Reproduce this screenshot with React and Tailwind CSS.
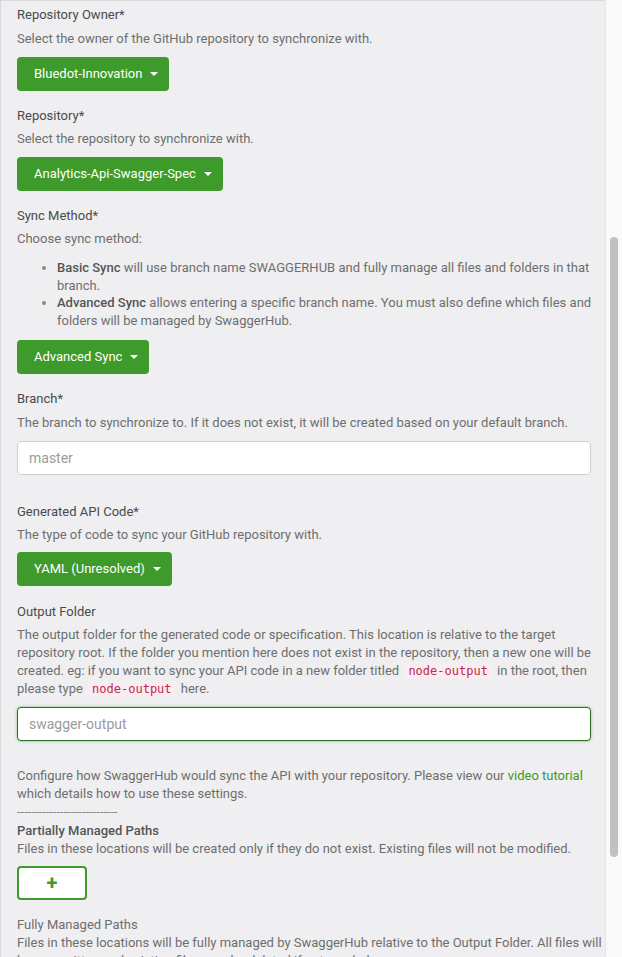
const Caret = () => (
  <span className="ml-[8px] inline-block h-0 w-0 border-x-[4px] border-t-[4px] border-x-transparent border-t-white" />
);

const GreenButton = ({ children }) => (
  <button
    type="button"
    className="flex h-[34px] items-center rounded-[4px] bg-[#3e9a2a] pl-[17px] pr-[11px] text-[13px] text-white"
  >
    {children}
    <Caret />
  </button>
);

const Label = ({ children, className = "" }) => (
  <div className={`text-[13px] leading-[18px] text-[#4a4a4a] ${className}`}>{children}</div>
);

const Help = ({ children, className = "" }) => (
  <div className={`text-[13px] leading-[18px] text-[#6e6e6e] ${className}`}>{children}</div>
);

const Code = ({ children }) => (
  <code className="mx-[2px] rounded-[3px] bg-[#f7eef1] px-[4px] py-[1px] font-['DejaVu_Sans_Mono',monospace] text-[12px] leading-none text-[#c7254e]">
    {children}
  </code>
);

export default function App() {
  return (
    <div className="flex h-[957px] w-[622px] overflow-hidden bg-[#efeff1] font-['Roboto',sans-serif]">
      <div className="flex-1 border-l border-t border-[#d9d9db] pl-[16px] pr-[14px] pt-[5px]">
        <Label>Repository Owner*</Label>
        <Help className="mt-[6px]">Select the owner of the GitHub repository to synchronize with.</Help>
        <div className="mt-[9px]">
          <GreenButton>Bluedot-Innovation</GreenButton>
        </div>

        <Label className="mt-[16px]">Repository*</Label>
        <Help className="mt-[5px]">Select the repository to synchronize with.</Help>
        <div className="mt-[9px]">
          <GreenButton>Analytics-Api-Swagger-Spec</GreenButton>
        </div>

        <Label className="mt-[16px]">Sync Method*</Label>
        <Help className="mt-[5px]">Choose sync method:</Help>
        <ul className="-mr-[8px] mt-[11px] list-disc pl-[40px] text-[13px] leading-[17.5px] text-[#6e6e6e] marker:text-[#8a8a8a]">
          <li>
            <span className="font-medium text-[#555]">Basic Sync</span> will use branch name SWAGGERHUB and fully
            manage all files and folders in that branch.
          </li>
          <li>
            <span className="font-medium text-[#555]">Advanced Sync</span> allows entering a specific branch name. You
            must also define which files and folders will be managed by SwaggerHub.
          </li>
        </ul>
        <div className="mt-[11px]">
          <GreenButton>Advanced Sync</GreenButton>
        </div>

        <Label className="mt-[16px]">Branch*</Label>
        <Help className="mt-[6px]">
          The branch to synchronize to. If it does not exist, it will be created based on your default branch.
        </Help>
        <div className="mt-[9px] flex h-[34px] items-center rounded-[4px] border border-[#cfcfcf] bg-white px-[11px] text-[14px] text-[#9b9b9b]">
          master
        </div>

        <Label className="mt-[28px]">Generated API Code*</Label>
        <Help className="mt-[5px]">The type of code to sync your GitHub repository with.</Help>
        <div className="mt-[8px]">
          <GreenButton>YAML (Unresolved)</GreenButton>
        </div>

        <Label className="mt-[17px]">Output Folder</Label>
        <Help className="mt-[5px]">
          The output folder for the generated code or specification. This location is relative to the target
          repository root. If the folder you mention here does not exist in the repository, then a new one will be
          created. eg: if you want to sync your API code in a new folder titled <Code>node-output</Code> in the root,
          then please type <Code>node-output</Code> here.
        </Help>
        <div className="mt-[9px] flex h-[34px] items-center rounded-[4px] border border-[#2f6b25] bg-white px-[11px] text-[14px] text-[#9b9b9b] shadow-[0_0_3px_rgba(62,154,42,0.6)]">
          swagger-output
        </div>

        <Help className="mt-[26px]">
          Configure how SwaggerHub would sync the API with your repository. Please view our{" "}
          <span className="text-[#3a9a25]">video tutorial</span> which details how to use these settings.
        </Help>
        <Help className="text-[#8a8a8a]">----------------------------</Help>
        <div className="mt-[1px] text-[13px] font-medium leading-[18px] text-[#555]">Partially Managed Paths</div>
        <Help>Files in these locations will be created only if they do not exist. Existing files will not be modified.</Help>
        <button
          type="button"
          className="mt-[8px] flex h-[34px] w-[70px] items-center justify-center rounded-[4px] border-2 border-[#3e9a2a] bg-white text-[20px] font-bold leading-none text-[#3e9a2a]"
        >
          +
        </button>

        <Help className="mt-[16px]">Fully Managed Paths</Help>
        <Help className="-mr-[16px]">
          Files in these locations will be fully managed by SwaggerHub relative to the Output Folder. All files will be
          overwritten and existing files may be deleted if not needed.
        </Help>
      </div>

      <div className="w-[17px] shrink-0 border-l border-[#e6e6e6] bg-[#fafafa] pt-[237px]">
        <div className="mx-auto h-[620px] w-[8px] rounded-full bg-[#c1c1c1]" />
      </div>
    </div>
  );
}
